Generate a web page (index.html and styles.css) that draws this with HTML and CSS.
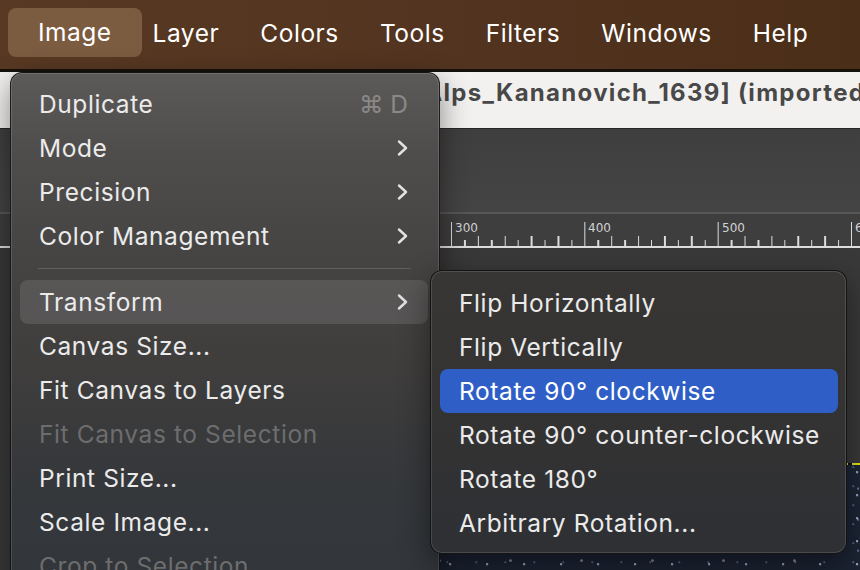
FILE: index.html
```html
<!DOCTYPE html>
<html lang="en">
<head>
<meta charset="utf-8">
<title>GIMP – Image menu</title>
<link rel="stylesheet" href="styles.css">
</head>
<body>
<div class="app">
  <nav class="menubar">
    <span class="mb-item active">Image</span>
    <span class="mb-item">Layer</span>
    <span class="mb-item">Colors</span>
    <span class="mb-item">Tools</span>
    <span class="mb-item">Filters</span>
    <span class="mb-item">Windows</span>
    <span class="mb-item">Help</span>
  </nav>
  <header class="titlebar">
    <span class="title">[Alps_Kananovich_1639] (imported)-1.0 (RGB color 8-bit gamma integer, GIMP built-in sRGB, 1 layer) 1920x1080 – GIMP</span>
  </header>
  <div class="toolbar"></div>
  <div class="ruler">
    <svg class="ruler-svg" width="860" height="34" viewBox="0 0 860 34">
      <defs>
        <pattern id="ticks" x="51" y="0" width="133.333" height="34" patternUnits="userSpaceOnUse">
          <rect x="0" y="8" width="1.3" height="26" fill="#dcdcdc"/>
          <rect x="13.3" y="26" width="1.3" height="8" fill="#dcdcdc"/>
          <rect x="26.7" y="22" width="1.3" height="12" fill="#dcdcdc"/>
          <rect x="40" y="26" width="1.3" height="8" fill="#dcdcdc"/>
          <rect x="53.3" y="22" width="1.3" height="12" fill="#dcdcdc"/>
          <rect x="66.7" y="26" width="1.3" height="8" fill="#dcdcdc"/>
          <rect x="80" y="22" width="1.3" height="12" fill="#dcdcdc"/>
          <rect x="93.3" y="26" width="1.3" height="8" fill="#dcdcdc"/>
          <rect x="106.7" y="22" width="1.3" height="12" fill="#dcdcdc"/>
          <rect x="120" y="26" width="1.3" height="8" fill="#dcdcdc"/>
        </pattern>
      </defs>
      <rect x="0" y="0" width="860" height="34" fill="url(#ticks)"/>
      <rect x="0" y="32" width="860" height="2" fill="#dcdcdc"/>
      <g class="ruler-labels">
        <text x="455" y="17.5">300</text>
        <text x="588" y="17.5">400</text>
        <text x="722" y="17.5">500</text>
        <text x="855" y="17.5">600</text>
      </g>
    </svg>
  </div>
  <div class="viewport">
    <div class="canvas"></div>
  </div>

  <div class="menu menu-main">
    <div class="mi"><span>Duplicate</span><span class="sc">⌘ D</span></div>
    <div class="mi"><span>Mode</span><svg class="chev" width="11" height="16" viewBox="0 0 11 16"><polyline points="2,1.5 9,8 2,14.5"/></svg></div>
    <div class="mi"><span>Precision</span><svg class="chev" width="11" height="16" viewBox="0 0 11 16"><polyline points="2,1.5 9,8 2,14.5"/></svg></div>
    <div class="mi"><span>Color Management</span><svg class="chev" width="11" height="16" viewBox="0 0 11 16"><polyline points="2,1.5 9,8 2,14.5"/></svg></div>
    <div class="sep"></div>
    <div class="mi hover"><span>Transform</span><svg class="chev" width="11" height="16" viewBox="0 0 11 16"><polyline points="2,1.5 9,8 2,14.5"/></svg></div>
    <div class="mi"><span>Canvas Size...</span></div>
    <div class="mi"><span>Fit Canvas to Layers</span></div>
    <div class="mi dis"><span>Fit Canvas to Selection</span></div>
    <div class="mi"><span>Print Size...</span></div>
    <div class="mi"><span>Scale Image...</span></div>
    <div class="mi dis"><span>Crop to Selection</span></div>
    <div class="mi"><span>Crop to Content</span></div>
  </div>

  <div class="menu menu-sub">
    <div class="mi"><span>Flip Horizontally</span></div>
    <div class="mi"><span>Flip Vertically</span></div>
    <div class="mi sel"><span>Rotate 90° clockwise</span></div>
    <div class="mi"><span>Rotate 90° counter-clockwise</span></div>
    <div class="mi"><span>Rotate 180°</span></div>
    <div class="mi"><span>Arbitrary Rotation...</span></div>
  </div>
</div>
</body>
</html>
```

FILE: styles.css
```css
html, body {
  margin: 0;
  padding: 0;
}
body {
  width: 860px;
  height: 570px;
  overflow: hidden;
  background: #3a3a3a;
  font-family: "Inter", "Noto Sans", "DejaVu Sans", sans-serif;
}
.app {
  position: relative;
  width: 860px;
  height: 570px;
  overflow: hidden;
  display: flex;
  flex-direction: column;
}

/* macOS menu bar */
.menubar {
  flex: none;
  height: 61px;
  padding: 8px 0 0 16.5px;
  border-bottom: 3px solid #15110d;
  background: linear-gradient(90deg, #583923 0%, #523420 50%, #4b2e18 100%);
  display: flex;
  align-items: flex-start;
  box-sizing: content-box;
}
.mb-item {
  color: #ffffff;
  font-size: 24.5px;
  letter-spacing: 0.5px;
  font-weight: 400;
  line-height: 50px;
  padding: 0 20.6px;
  white-space: nowrap;
}
.mb-item.active {
  background: #7b5c41;
  border-radius: 8px;
  padding: 0 30px;
  line-height: 49px;
  margin: 0 -9.6px 0 -8.5px;
}

/* window title */
.titlebar {
  flex: none;
  height: 56px;
  border-bottom: 1px solid #262626;
  background: #f2f1f0;
  overflow: hidden;
  white-space: nowrap;
  padding-left: 414px;
  box-sizing: content-box;
}
.title {
  display: block;
  font-size: 24px;
  font-weight: 700;
  letter-spacing: 1.3px;
  color: #484848;
  line-height: 40px;
  padding-top: 1px;
}

.toolbar {
  flex: none;
  height: 83px;
  background: linear-gradient(180deg, #3f3f3f, #444444);
}

.ruler {
  flex: none;
  height: 34px;
  border-top: 2px solid #575757;
  background: #3e3e3e;
}
.ruler-svg {
  display: block;
  shape-rendering: crispEdges;
}
.ruler-labels text {
  font-family: "DejaVu Sans", sans-serif;
  font-size: 12px;
  fill: #d2d2d2;
}

.viewport {
  flex: 1;
  background: #393939;
  padding: 215px 0 0 180px;
}
.canvas {
  height: 120px;
  background:
    repeating-linear-gradient(90deg, #e4e21c 0 8px, #111 8px 12px) top left / 100% 2px no-repeat,
    radial-gradient(circle at 30% 40%, rgba(190, 205, 230, 0.75) 0 0.9px, transparent 1.6px) 0 0 / 37px 23px,
    radial-gradient(circle at 70% 60%, rgba(140, 165, 205, 0.6) 0 0.8px, transparent 1.5px) 5px 7px / 53px 31px,
    radial-gradient(circle at 50% 20%, rgba(220, 200, 210, 0.55) 0 1px, transparent 1.7px) 11px 3px / 71px 43px,
    radial-gradient(circle at 15% 75%, rgba(120, 150, 200, 0.5) 0 0.8px, transparent 1.4px) 2px 9px / 29px 19px,
    linear-gradient(180deg, #1d2636, #1b2332);
}

/* menus */
.menu {
  position: absolute;
  box-sizing: border-box;
  border-radius: 12px;
  border: 1px solid rgba(10, 10, 10, 0.75);
  box-shadow: inset 0 0 0 1px rgba(255, 255, 255, 0.13), 0 10px 30px rgba(0, 0, 0, 0.45);
  color: #ebebeb;
  font-size: 24.5px;
  letter-spacing: 0.6px;
  font-weight: 400;
}
.menu-main {
  left: 10px;
  top: 72px;
  width: 430px;
  height: 580px;
  padding: 9px 11px 0 9px;
  background: linear-gradient(180deg, #5c5a59 0%, #4f4d4c 14%, #464443 32%, #403e3d 50%, #36383b 68%, #2f343a 100%);
}
.menu-sub {
  left: 430px;
  top: 270px;
  width: 417px;
  height: 284px;
  padding: 10px 8px 0 9px;
  background: linear-gradient(180deg, #383634 0%, #343333 50%, #2e3034 100%);
}
.mi {
  height: 44px;
  display: flex;
  align-items: center;
  justify-content: space-between;
  padding: 0 20px 0 19px;
  border-radius: 8px;
  white-space: nowrap;
}
.mi.hover {
  background: rgba(255, 255, 255, 0.11);
}
.mi.sel {
  background: #2f5fc6;
  color: #ffffff;
}
.mi.dis {
  color: #6d6d6e;
}
.sc {
  color: #8a8988;
  letter-spacing: 0;
  font-family: "Inter", "DejaVu Sans", sans-serif;
}
.chev {
  display: block;
  fill: none;
  stroke: #e2e2e2;
  stroke-width: 2.4;
  stroke-linecap: round;
  stroke-linejoin: round;
}
.sep {
  height: 1px;
  margin: 10px 17px 11px 18px;
  background: #615f5e;
}
```
